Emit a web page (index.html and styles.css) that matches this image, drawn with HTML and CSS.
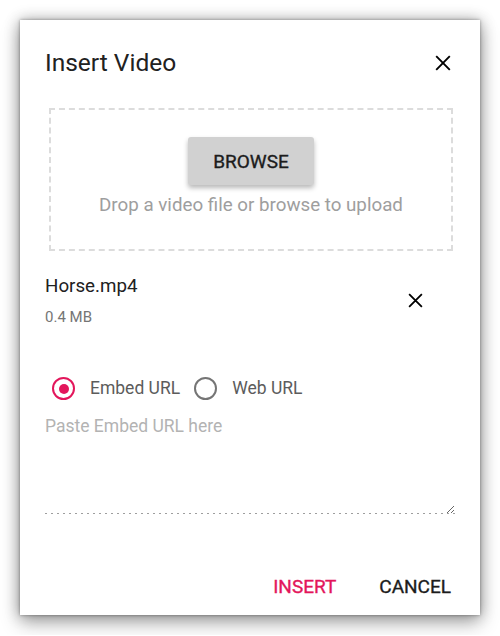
FILE: index.html
```html
<!DOCTYPE html>
<html>
<head>
<meta charset="utf-8">
<link rel="stylesheet" href="styles.css">
</head>
<body>
<div class="dialog">
  <div class="header">
    <h2 class="title">Insert Video</h2>
    <button class="icon-btn close" aria-label="Close">
      <svg width="16" height="16" viewBox="0 0 16 16"><path d="M1.2 1.2 L14.8 14.8 M14.8 1.2 L1.2 14.8" stroke="#000" stroke-width="1.9" fill="none"/></svg>
    </button>
  </div>
  <div class="content">
    <div class="dropzone">
      <button class="browse">BROWSE</button>
      <p class="hint">Drop a video file or browse to upload</p>
    </div>
    <div class="file">
      <div class="file-info">
        <div class="file-name">Horse.mp4</div>
        <div class="file-size">0.4 MB</div>
      </div>
      <button class="icon-btn remove" aria-label="Remove">
        <svg width="15" height="15" viewBox="0 0 16 16"><path d="M1.2 1.2 L14.8 14.8 M14.8 1.2 L1.2 14.8" stroke="#000" stroke-width="1.9" fill="none"/></svg>
      </button>
    </div>
    <div class="radios">
      <label class="radio"><span class="circle checked"></span><span class="radio-label">Embed URL</span></label>
      <label class="radio"><span class="circle"></span><span class="radio-label">Web URL</span></label>
    </div>
    <textarea class="url" placeholder="Paste Embed URL here"></textarea>
  </div>
  <div class="footer">
    <button class="flat primary">INSERT</button>
    <button class="flat">CANCEL</button>
  </div>
</div>
</body>
</html>
```
FILE: styles.css
```css
* { box-sizing: border-box; }
html, body { margin: 0; padding: 0; background: #fff; }
body {
  padding: 20px;
  font-family: Roboto, "Noto Sans", sans-serif;
  color: #212121;
}
button {
  font-family: inherit;
  border: none;
  background: none;
  padding: 0;
  margin: 0;
  cursor: pointer;
}
.dialog {
  width: 460px;
  background: #fff;
  box-shadow: 0 0 3px rgba(0,0,0,0.35), 0 8px 18px rgba(0,0,0,0.3), 0 0 14px rgba(0,0,0,0.3);
}
.header {
  display: flex;
  align-items: center;
  justify-content: space-between;
  padding: 28px 25px 0 25px;
}
.title {
  margin: 0;
  font-size: 24.5px;
  line-height: 30px;
  font-weight: 400;
  color: #212121;
}
.icon-btn {
  width: 24px;
  height: 24px;
  display: flex;
  align-items: center;
  justify-content: center;
}
.content {
  padding: 0 25px;
}
.dropzone {
  margin: 30px 2px 0 4px;
  border: 2px dashed #dcdcdc;
  padding: 27px 0 32px;
  display: flex;
  flex-direction: column;
  align-items: center;
}
.browse {
  width: 126px;
  height: 48px;
  background: #d1d1d1;
  font-size: 19px;
  font-weight: 400;
  -webkit-text-stroke: 0.35px currentColor;
  color: #1c1c1c;
  box-shadow: 0 3px 5px rgba(0,0,0,0.28);
  border-radius: 3px;
}
.hint {
  margin: 8px 0 0;
  font-size: 18.75px;
  line-height: 24px;
  color: #9e9e9e;
}
.file {
  margin-top: 23px;
  display: flex;
  align-items: center;
  justify-content: space-between;
  padding-right: 28px;
}
.file-name {
  font-size: 18.75px;
  line-height: 24px;
  color: #212121;
}
.file-size {
  margin-top: 9px;
  font-size: 15px;
  line-height: 20px;
  color: #757575;
}
.radios {
  margin-top: 48px;
  display: flex;
  align-items: center;
  gap: 14px;
  padding-left: 7px;
}
.radio {
  display: flex;
  align-items: center;
}
.circle {
  width: 23px;
  height: 23px;
  border: 2px solid #757575;
  border-radius: 50%;
  margin-right: 15px;
  margin-top: 2px;
  display: flex;
  align-items: center;
  justify-content: center;
}
.circle.checked {
  border-color: #e3165b;
}
.circle.checked::after {
  content: "";
  width: 10px;
  height: 10px;
  border-radius: 50%;
  background: #e3165b;
}
.radio-label {
  font-size: 17.5px;
  line-height: 24px;
  color: #5c5c5c;
}
.url {
  display: block;
  width: 410px;
  height: 100px;
  margin: 14px 0 0;
  padding: 0;
  border: none;
  outline: none;
  font-family: inherit;
  font-size: 17.5px;
  line-height: 24px;
  color: #212121;
  background-color: #fff;
  background-image: repeating-linear-gradient(to right, #9e9e9e 0 2px, transparent 2px 6px);
  background-size: 100% 1px;
  background-position: left bottom;
  background-repeat: no-repeat;
}
.url::placeholder {
  color: #b3b3b3;
}
.footer {
  display: flex;
  justify-content: flex-end;
  gap: 43px;
  padding: 61px 29px 16px 0;
}
.flat {
  font-size: 19px;
  line-height: 24px;
  font-weight: 400;
  -webkit-text-stroke: 0.35px currentColor;
  color: #1c1c1c;
}
.flat.primary {
  color: #e3165b;
}
```
